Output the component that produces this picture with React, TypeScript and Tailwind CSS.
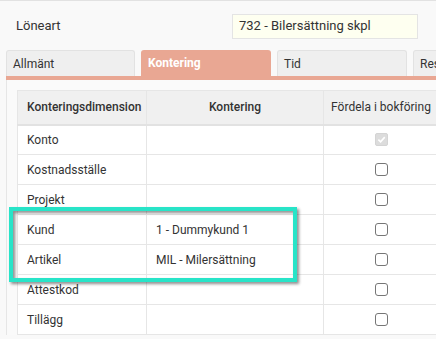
import React from "react";

const rows = [
  { dim: "Konto", kont: "", disabled: true },
  { dim: "Kostnadsställe", kont: "" },
  { dim: "Projekt", kont: "" },
  { dim: "Kund", kont: "1 - Dummykund 1" },
  { dim: "Artikel", kont: "MIL - Milersättning" },
  { dim: "Attestkod", kont: "" },
  { dim: "Tillägg", kont: "" },
];

function Checkbox({ disabled }: { disabled?: boolean }) {
  if (disabled) {
    return (
      <div className="w-[13px] h-[13px] rounded-[2px] bg-[#dcdcdc] border border-[#d4d4d4] flex items-center justify-center">
        <svg width="9" height="9" viewBox="0 0 10 10">
          <path d="M1.5 5.2 L4 7.6 L8.6 2.4" stroke="#fff" strokeWidth="1.8" fill="none" />
        </svg>
      </div>
    );
  }
  return <div className="w-[13px] h-[13px] rounded-[3px] border border-[#767676] bg-white" />;
}

export default function App() {
  return (
    <div
      className="relative w-[436px] h-[339px] overflow-hidden bg-[#f9f9f9] border-t border-[#e2e2e2] text-[13px] text-[#333]"
      style={{ fontFamily: "Roboto, 'Liberation Sans', sans-serif" }}
    >
      <div className="flex items-center h-[49px] pt-[1px]">
        <div className="w-[232px] pl-[16px]">Löneart</div>
        <div className="w-[186px] h-[25px] bg-[#fefff0] border border-[#e4e4e4] flex items-center pl-[6px]">
          732 - Bilersättning skpl
        </div>
      </div>
      <div className="flex gap-[6px] pl-[6px] text-[12px]">
        <div className="w-[129px] h-[26px] shrink-0 rounded-t-[3px] bg-[#efefef] border border-b-0 border-[#e2e2e2] flex items-center pl-[6px]">
          Allmänt
        </div>
        <div className="w-[130px] h-[26px] shrink-0 rounded-t-[3px] bg-[#e9a793] flex items-center pl-[7px] text-white font-bold">
          Kontering
        </div>
        <div className="w-[130px] h-[26px] shrink-0 rounded-t-[3px] bg-[#efefef] border border-b-0 border-[#e2e2e2] flex items-center pl-[6px]">
          Tid
        </div>
        <div className="w-[130px] h-[26px] shrink-0 rounded-t-[3px] bg-[#efefef] border border-b-0 border-[#e2e2e2] flex items-center pl-[6px]">
          Resor
        </div>
      </div>
      <div className="ml-[6px] h-[4px] bg-[#e9a793]" />
      <div className="ml-[6px] border-l border-[#e6e6e6] pl-[10px] pt-[10px] bg-[#fafafa]">
        <table className="table-fixed border-collapse w-[421px] bg-white text-[12px]">
          <colgroup>
            <col className="w-[129px]" />
            <col className="w-[177px]" />
            <col className="w-[115px]" />
          </colgroup>
          <thead>
            <tr className="h-[34px] bg-[#f0f0f0] border-b-2 border-[#e2e2e2]">
              <th className="text-left font-medium pl-[9px] border border-[#e6e6e6] whitespace-nowrap">Konteringsdimension</th>
              <th className="text-center font-medium border border-[#e6e6e6]">Kontering</th>
              <th className="text-center font-normal border border-[#e6e6e6] whitespace-nowrap">Fördela i bokföring</th>
            </tr>
          </thead>
          <tbody>
            {rows.map((r) => (
              <tr key={r.dim} className="h-[30px]">
                <td className="pl-[9px] border border-[#e6e6e6]">{r.dim}</td>
                <td className="pl-[9px] border border-[#e6e6e6] whitespace-nowrap">{r.kont}</td>
                <td className="border border-[#e6e6e6]">
                  <div className="flex justify-center">
                    <Checkbox disabled={r.disabled} />
                  </div>
                </td>
              </tr>
            ))}
          </tbody>
        </table>
      </div>
      <div className="absolute left-[9px] top-[206px] w-[288px] h-[75px] border-[4px] border-[#28e4c8] drop-shadow-[2px_2px_1.5px_rgba(0,0,0,0.45)]" />
    </div>
  );
}
